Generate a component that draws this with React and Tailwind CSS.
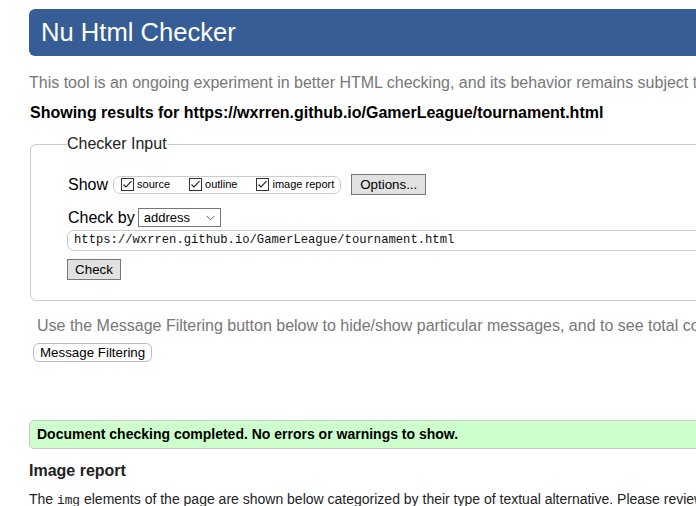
import React from 'react';

const Tick = () => (
  <svg width="13" height="13" viewBox="0 0 13 13" className="shrink-0">
    <rect x="0.5" y="0.5" width="12" height="12" fill="#fff" stroke="#333" />
    <polyline points="2.5,6.5 5,9 10.5,3.2" fill="none" stroke="#222" strokeWidth="1.1" />
  </svg>
);

const ShowOption = ({ label, last }) => (
  <label className={`flex items-center gap-[3px] ${last ? '' : 'mr-[19px]'}`}>
    <Tick />
    <span className="text-[11px] leading-[13px] text-black">{label}</span>
  </label>
);

const App = () => {
  return (
    <div className="w-[696px] h-[506px] overflow-hidden bg-white font-['Liberation_Sans',Arial,sans-serif] text-black">
      <div className="w-[1100px] pl-[29px]">
        <h1 className="mt-[9px] h-[47px] rounded-l-[6px] bg-[#365d95] pl-[12px] text-[25.6px] leading-[47px] text-white font-normal">
          Nu Html Checker
        </h1>

        <p className="mt-[17px] text-[16px] leading-[20px] text-[#777] whitespace-nowrap">
          This tool is an ongoing experiment in better HTML checking, and its behavior remains subject to change
        </p>
        <p className="mt-[10px] ml-[1px] text-[16px] leading-[20px] font-bold whitespace-nowrap">
          Showing results for https://wxrren.github.io/GamerLeague/tournament.html
        </p>

        <fieldset className="mt-[11px] ml-[1px] border border-[#ccc] rounded-[6px] pl-[36px] pt-[20px] pb-[20px]">
          <legend className="text-[16px] leading-[20px] text-[#222]">Checker Input</legend>

          <div className="flex items-center h-[21px]">
            <span className="text-[16px] leading-[20px] ml-[1px]">Show</span>
            <div className="ml-[5px] flex items-center h-[18px] border border-[#ccc] rounded-[7px] pl-[7px] pr-[6px]">
              <ShowOption label="source" />
              <ShowOption label="outline" />
              <ShowOption label="image report" last />
            </div>
            <button className="ml-[10px] h-[21px] w-[75px] bg-[#e1e1e1] border border-[#777] text-[13.33px] leading-[19px] text-black">
              Options...
            </button>
          </div>

          <div className="mt-[13px] flex items-center h-[19px]">
            <span className="text-[16px] leading-[20px] ml-[1px]">Check by</span>
            <div className="ml-[3px] relative flex items-center w-[83px] h-[19px] border border-[#767676] bg-white pl-[5px] text-[13px] leading-[17px]">
              address
              <svg width="9" height="6" viewBox="0 0 9 6" className="absolute right-[5px] top-[6px]">
                <polyline points="0.5,0.8 4.5,4.8 8.5,0.8" fill="none" stroke="#666" strokeWidth="1" />
              </svg>
            </div>
          </div>

          <div className="mt-[3px] h-[21px] border border-[#ccc] rounded-l-[7px] pl-[6px] font-['Liberation_Mono',monospace] text-[12.2px] leading-[19px] text-[#111]">
            https://wxrren.github.io/GamerLeague/tournament.html
          </div>

          <button className="mt-[8px] h-[21px] w-[54px] bg-[#e1e1e1] border border-[#777] text-[13.33px] leading-[19px] text-black block">
            Check
          </button>
        </fieldset>

        <p className="mt-[15px] ml-[8px] text-[16px] leading-[20px] text-[#777] whitespace-nowrap">
          Use the Message Filtering button below to hide/show particular messages, and to see total counts of errors and warnings.
        </p>
        <button className="mt-[7px] ml-[4px] h-[19px] px-[6px] bg-white border border-[#bbb] rounded-[6px] text-[13.33px] leading-[17px] text-black block">
          Message Filtering
        </button>

        <div className="mt-[58px] h-[29px] border border-[#c8c8c8] rounded-l-[5px] bg-[#ccffcc] pl-[7px] text-[14px] leading-[27px] font-bold whitespace-nowrap">
          Document checking completed. No errors or warnings to show.
        </div>

        <h2 className="mt-[12px] text-[16px] leading-[20px] font-bold text-[#222]">Image report</h2>
        <p className="mt-[8px] text-[14px] leading-[20px] text-[#222] whitespace-nowrap">
          The <code className="font-['Liberation_Mono',monospace] text-[12.8px]">img</code> elements of the page are shown below categorized by their type of textual alternative. Please review the text alternatives.
        </p>
      </div>
    </div>
  );
};

export default App;
